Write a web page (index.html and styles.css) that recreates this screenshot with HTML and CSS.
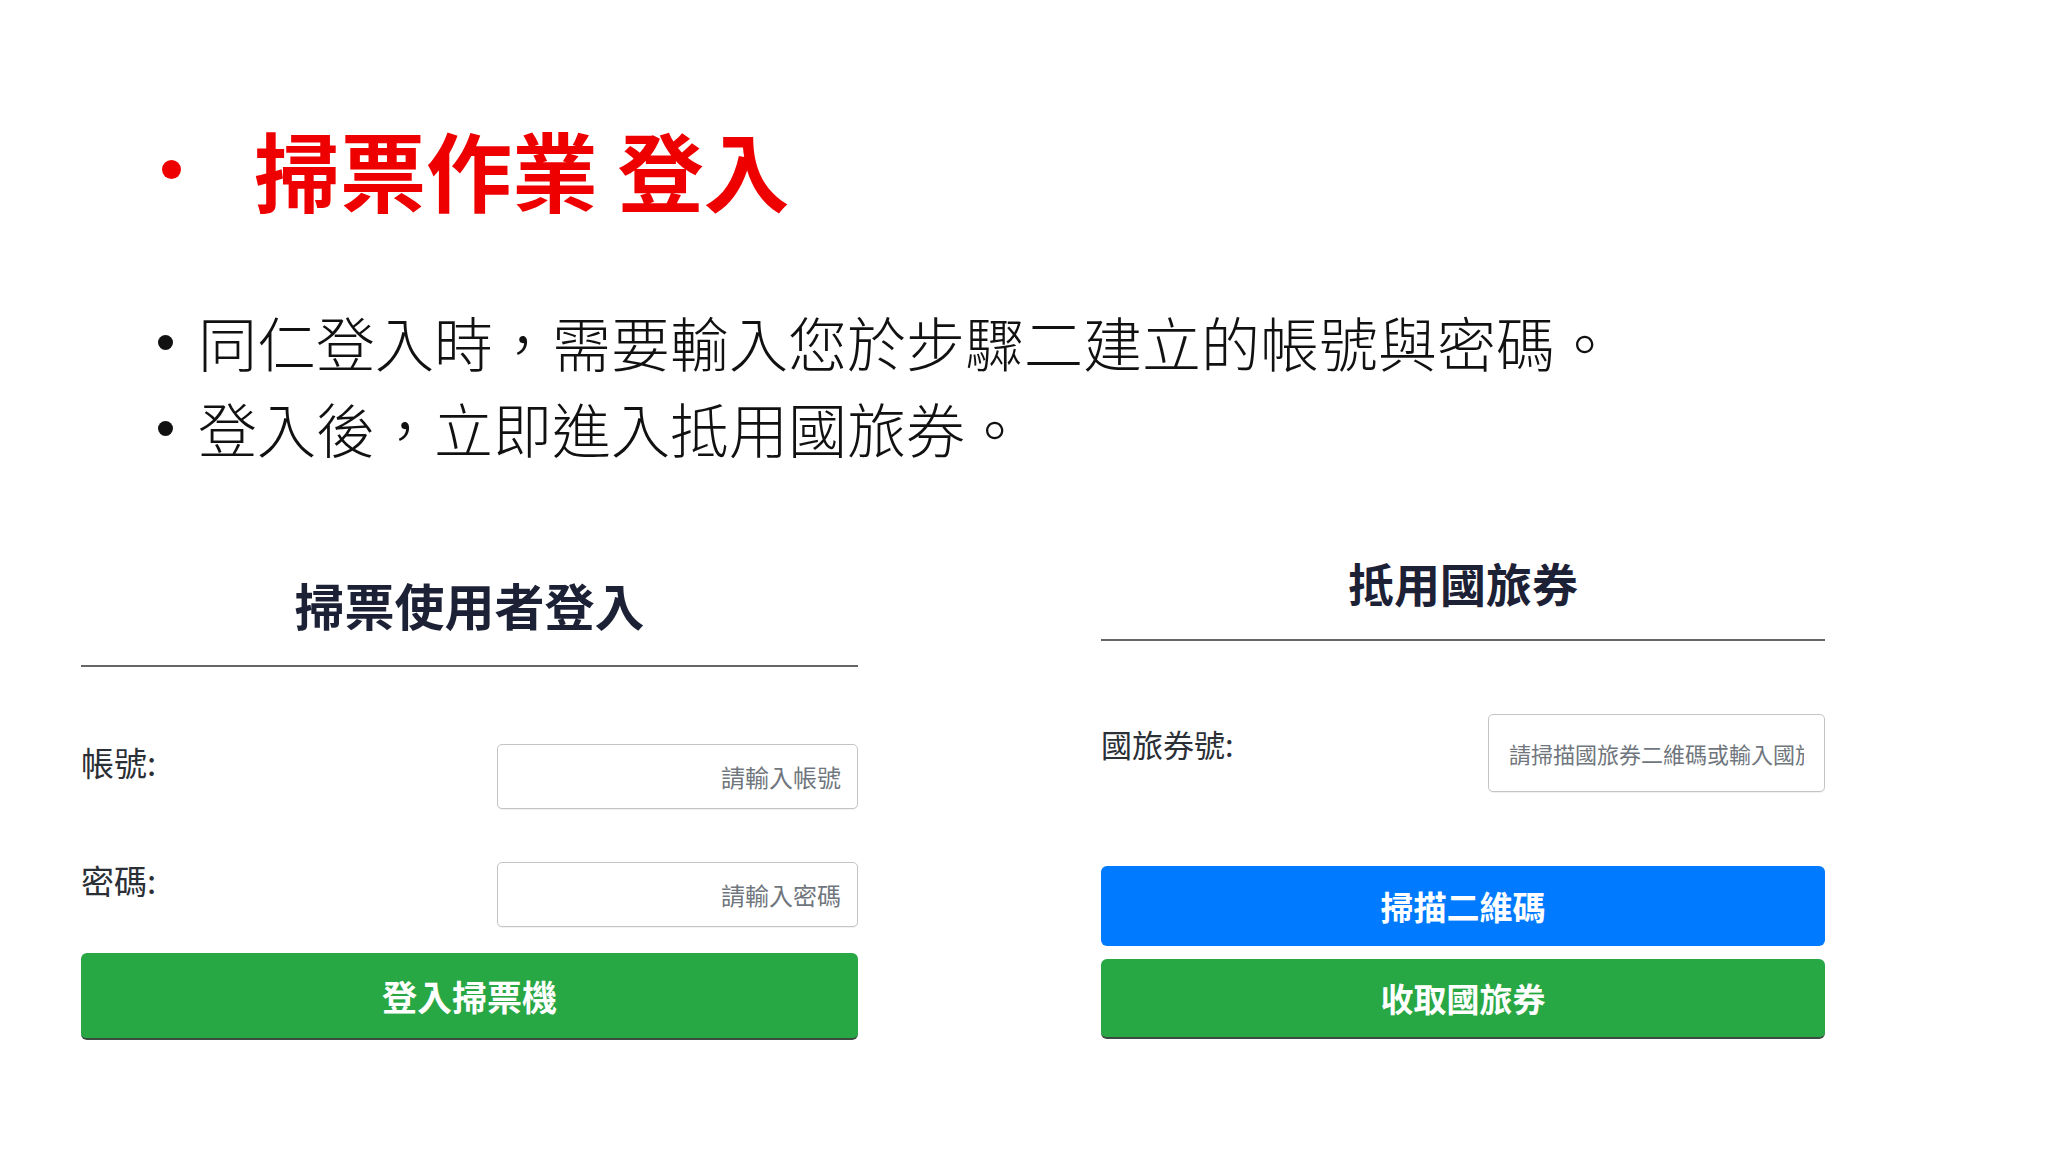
FILE: index.html
```html
<!DOCTYPE html>
<html>
<head>
    <meta charset="utf-8">
    <link rel="stylesheet" href="styles.css">
</head>
<body>
<div class="slide">
  <h1 class="title"><span class="title-dot"></span><span>掃票作業 登入</span></h1>

  <ul class="points">
    <li><span class="dot"></span>同仁登入時，需要輸入您於步驟二建立的帳號與密碼。</li>
    <li><span class="dot"></span>登入後，立即進入抵用國旅券。</li>
  </ul>

  <div class="panels">
    <div class="panel login">
      <h2>掃票使用者登入</h2>
      <div class="rule"></div>
      <div class="row first">
        <label>帳號:</label>
        <input type="text" placeholder="請輸入帳號">
      </div>
      <div class="row second">
        <label>密碼:</label>
        <input type="password" placeholder="請輸入密碼">
      </div>
      <button class="btn green">登入掃票機</button>
    </div>

    <div class="panel voucher">
      <h2>抵用國旅券</h2>
      <div class="rule"></div>
      <div class="row first">
        <label>國旅券號:</label>
        <input type="text" placeholder="請掃描國旅券二維碼或輸入國旅券號">
      </div>
      <button class="btn blue">掃描二維碼</button>
      <button class="btn green">收取國旅券</button>
    </div>
  </div>
</div>
</body>
</html>
```

FILE: styles.css
```css
body {
  margin: 0;
  background: #fff;
  font-family: "Noto Sans CJK TC", "Noto Sans", sans-serif;
  color: #222;
}

.slide {
  width: 2048px;
  height: 1151px;
  overflow: hidden;
}

/* title */
.title {
  display: flex;
  align-items: center;
  margin: 119px 0 0 162px;
  height: 100px;
  font-size: 86px;
  line-height: 100px;
  font-weight: 700;
  color: #ee0000;
}

.title-dot {
  width: 19px;
  height: 19px;
  border-radius: 50%;
  background: #ee0000;
  margin-right: 73px;
}

/* bullet points */
.points {
  list-style: none;
  margin: 80px 0 0 158px;
  padding: 0;
  font-size: 59px;
  line-height: 86px;
  font-weight: 300;
  color: #111;
}

.points li {
  display: flex;
  align-items: center;
}

.points .dot {
  width: 15px;
  height: 15px;
  border-radius: 50%;
  background: #111;
  margin-right: 25px;
}

/* panels */
.panels {
  display: flex;
  align-items: flex-start;
  margin: 81px 0 0 81px;
  gap: 243px;
}

.panel {
  display: flex;
  flex-direction: column;
}

.panel h2 {
  margin: 0;
  text-align: center;
  line-height: 60px;
  font-weight: 700;
  color: #1d2136;
}

.rule {
  height: 2px;
  background: #666;
}

.row {
  display: flex;
  justify-content: space-between;
  align-items: flex-start;
}

.row label {
  font-size: 33px;
  line-height: 40px;
  color: #2b2f36;
}

.row input {
  box-sizing: border-box;
  border: 1px solid #c4c4c4;
  border-radius: 5px;
  font-family: inherit;
  color: #333;
  outline: none;
  box-shadow: 0 1px 1px rgba(0,0,0,0.06);
}

.row input::placeholder {
  color: #70767d;
}

.btn {
  border: none;
  border-radius: 6px;
  font-family: inherit;
  font-weight: 700;
  color: #fff;
  padding: 0;
}

.green {
  background: #28a745;
  border-bottom: 2px solid #3d4a40;
}

.blue {
  background: #007bff;
}

/* left panel */
.login {
  width: 777px;
  padding-top: 22px;
}

.login h2 {
  font-size: 50px;
}

.login .rule {
  margin-top: 31px;
}

.login .row.first {
  margin-top: 77px;
}

.login .row.second {
  margin-top: 53px;
}

.login .row label {
  margin-top: -2px;
}

.login input {
  width: 361px;
  height: 65px;
  text-align: right;
  padding: 0 16px;
  font-size: 24px;
}

.login .btn {
  margin-top: 26px;
  height: 87px;
  font-size: 35px;
}

/* right panel */
.voucher {
  width: 724px;
}

.voucher h2 {
  font-size: 46px;
}

.voucher .rule {
  margin-top: 27px;
}

.voucher .row.first {
  margin-top: 73px;
}

.voucher .row label {
  margin-top: 10px;
  font-size: 31px;
}

.voucher input {
  width: 337px;
  height: 78px;
  padding: 0 20px;
  font-size: 22px;
}

.voucher .btn {
  height: 80px;
  font-size: 33px;
}

.voucher .blue {
  margin-top: 74px;
}

.voucher .green {
  margin-top: 13px;
}
```
